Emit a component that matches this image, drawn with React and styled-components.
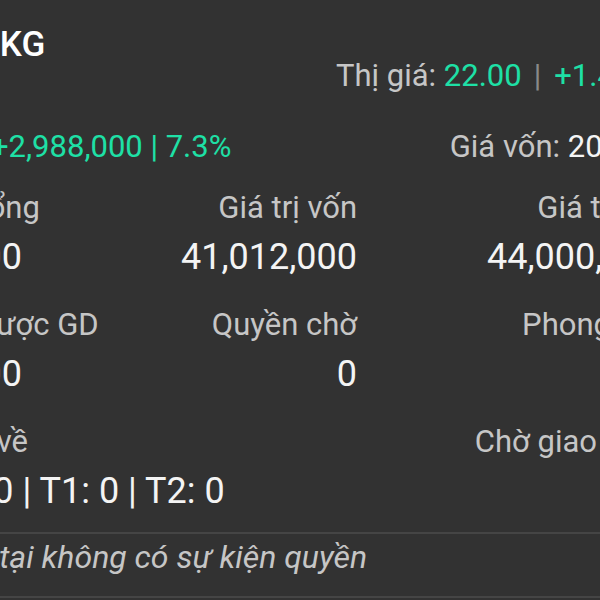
import React from 'react';
import styled, { createGlobalStyle } from 'styled-components';

const GlobalStyle = createGlobalStyle`
    html, body {
        margin: 0;
        padding: 0;
        background: #323232;
    }
    body {
        font-family: Roboto, "Noto Sans", "Liberation Sans", sans-serif;
    }
`;

const Viewport = styled.div`
    width: 600px;
    height: 600px;
    overflow: hidden;
    background: #323232;
`;

const Card = styled.div`
    width: 729px;
    margin-left: -66px;
    padding-top: 31px;
    color: #f4f4f4;
`;

const Title = styled.div`
    font-size: 35px;
    font-weight: 500;
    line-height: 28px;
    padding-left: 43px;
    color: #ffffff;
`;

const PriceRow = styled.div`
    font-size: 31px;
    line-height: 34px;
    padding-left: 402px;
    white-space: nowrap;
    color: #c6c6c6;
`;

const Green = styled.span`
    color: #1ee0a6;
`;

const Sep = styled.span`
    color: #8a8a8a;
    margin: 0 13px 0 12px;
`;

const SummaryRow = styled.div`
    display: flex;
    justify-content: space-between;
    align-items: baseline;
    margin-top: 36px;
    line-height: 36px;
    white-space: nowrap;
`;

const Profit = styled.span`
    font-size: 31px;
    color: #1ee0a6;
    padding-left: 57px;
`;

const CostPrice = styled.span`
    font-size: 31px;
    color: #c6c6c6;

    b {
        font-weight: 400;
        color: #f4f4f4;
    }
`;

const Grid = styled.div`
    display: grid;
    grid-template-columns: 200px 223px 306px;
    row-gap: 31px;
    margin-top: 26px;
    padding-bottom: 21px;
`;

const Cell = styled.div`
    display: flex;
    flex-direction: column;
    gap: 12px;
    align-items: ${p => (p.$align === 'left' ? 'flex-start' : 'flex-end')};
    white-space: nowrap;
`;

const Label = styled.div`
    font-size: 31px;
    line-height: 34px;
    color: #c6c6c6;
`;

const Value = styled.div`
    font-size: 36px;
    line-height: 40px;
    color: #f4f4f4;
`;

const Note = styled.div`
    border-top: 2px solid #454545;
    border-bottom: 2px solid #454545;
    padding: 6px 0 22px;
    font-size: 32px;
    line-height: 34px;
    font-style: italic;
    text-indent: -6px;
    color: #c6c6c6;
    white-space: nowrap;
`;

const cells = [
    { label: 'KL tổng', value: '2,000', align: 'left' },
    { label: 'Giá trị vốn', value: '41,012,000' },
    { label: 'Giá trị TT', value: '44,000,000' },
    { label: 'KL được GD', value: '2,000', align: 'left' },
    { label: 'Quyền chờ', value: '0' },
    { label: 'Phong tỏa', value: '0' },
    { label: 'Chờ về', value: 'T0: 0 | T1: 0 | T2: 0', align: 'left' },
    { label: '', value: '' },
    { label: 'Chờ giao dịch', value: '0' },
];

export default function App() {
    return (
        <Viewport>
            <GlobalStyle />
            <Card>
                <Title>DKG</Title>
                <PriceRow>
                    Thị giá: <Green>22.00</Green>
                    <Sep>|</Sep>
                    <Green>+1.40 (6.80%)</Green>
                </PriceRow>
                <SummaryRow>
                    <Profit>+2,988,000 | 7.3%</Profit>
                    <CostPrice>
                        Giá vốn: <b>20.506</b>
                    </CostPrice>
                </SummaryRow>
                <Grid>
                    {cells.map((c, i) => (
                        <Cell key={i} $align={c.align}>
                            <Label>{c.label || '\u00a0'}</Label>
                            <Value>{c.value || '\u00a0'}</Value>
                        </Cell>
                    ))}
                </Grid>
                <Note>Hiện tại không có sự kiện quyền</Note>
            </Card>
        </Viewport>
    );
}
